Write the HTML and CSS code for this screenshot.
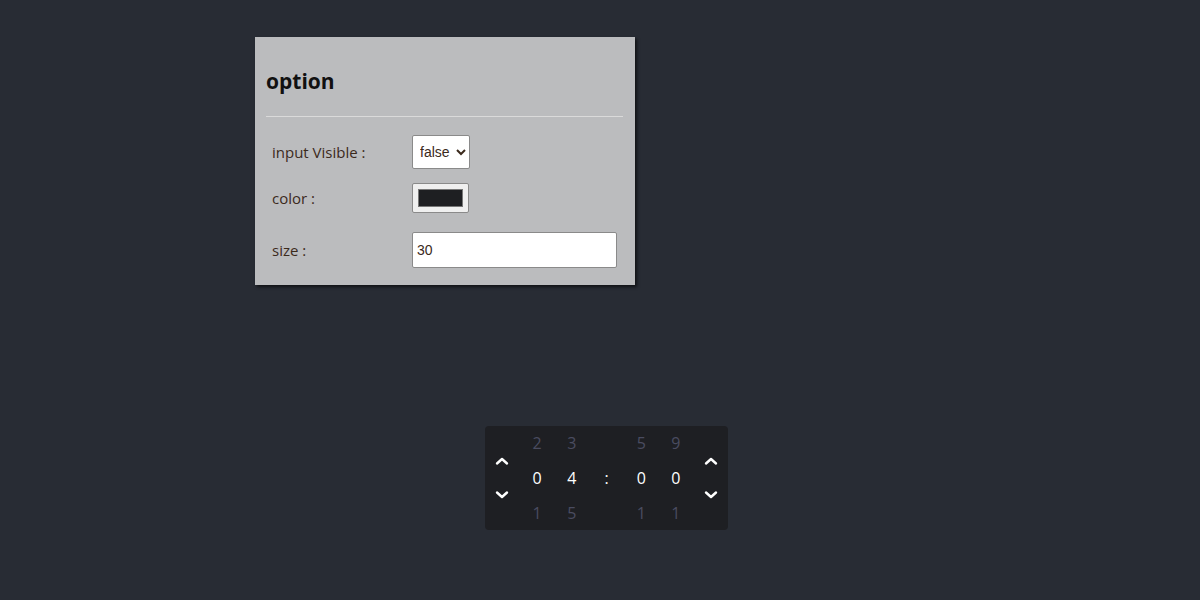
FILE: index.html
```html
<!doctype html>
<html>
  <head>
    <meta charset=utf-8>
    <title>option</title>
    <link rel="stylesheet" href="styles.css">
  </head>
  <body>
    <div class=panel>
      <h3 class=panel-title>option</h3>
      <hr class=panel-rule>
      <div class=opt-row>
        <label class=opt-label>input Visible :</label>
        <select class=opt-select>
          <option>false</option>
          <option>true</option>
        </select>
      </div>
      <div class="opt-row opt-row-color">
        <label class=opt-label>color :</label>
        <span class=opt-color><span class=opt-swatch></span></span>
      </div>
      <div class=opt-row>
        <label class=opt-label>size :</label>
        <input class=opt-text type=text value=30>
      </div>
    </div>

    <div class=picker>
      <div class=pk-arrows>
        <svg width=14 height=10 viewBox="0 0 14 10"><path d="M2 7.5 L7 3 L12 7.5" fill=none stroke="#fff" stroke-width=2.4 stroke-linecap=round stroke-linejoin=round /></svg>
        <svg width=14 height=10 viewBox="0 0 14 10"><path d="M2 2.5 L7 7 L12 2.5" fill=none stroke="#fff" stroke-width=2.4 stroke-linecap=round stroke-linejoin=round /></svg>
      </div>
      <div class=pk-col><span class=dim>2</span><span>0</span><span class=dim>1</span></div>
      <div class=pk-col><span class=dim>3</span><span>4</span><span class=dim>5</span></div>
      <div class=pk-col><span></span><span>:</span><span></span></div>
      <div class=pk-col><span class=dim>5</span><span>0</span><span class=dim>1</span></div>
      <div class=pk-col><span class=dim>9</span><span>0</span><span class=dim>1</span></div>
      <div class=pk-arrows>
        <svg width=14 height=10 viewBox="0 0 14 10"><path d="M2 7.5 L7 3 L12 7.5" fill=none stroke="#fff" stroke-width=2.4 stroke-linecap=round stroke-linejoin=round /></svg>
        <svg width=14 height=10 viewBox="0 0 14 10"><path d="M2 2.5 L7 7 L12 2.5" fill=none stroke="#fff" stroke-width=2.4 stroke-linecap=round stroke-linejoin=round /></svg>
      </div>
    </div>
  </body>
</html>
```
FILE: styles.css
```css
html, body {
  margin: 0;
  height: 100%;
  background: #282c34;
}
body {
  padding-top: 37px;
  box-sizing: border-box;
  font-family: 'Open Sans', 'Noto Sans', sans-serif;
}

.panel {
  box-sizing: border-box;
  width: 380px;
  height: 248px;
  margin-left: 255px;
  padding: 0 12px 0 11px;
  background: #bbbcbe;
  box-shadow: 2px 2px 3px #0009;
}
.panel-title {
  margin: 0;
  padding-top: 28px;
  font-size: 21px;
  line-height: 32px;
  font-weight: 700;
  color: #111;
}
.panel-rule {
  margin: 19px 0 18px;
  border: none;
  border-top: 1px solid #dadada;
  height: 0;
}

.opt-row {
  display: flex;
  align-items: center;
  padding-left: 6px;
  margin-bottom: 14px;
}
.opt-row-color { margin-bottom: 19px }
.opt-label {
  width: 140px;
  font-size: 15px;
  color: #3b2a1c;
}
.opt-select {
  box-sizing: border-box;
  width: 58px;
  height: 34px;
  padding: 0 2px 0 3px;
  border: 1px solid #8a8a8a;
  border-radius: 2px;
  background: #fff;
  font-family: 'Liberation Sans', Arial, sans-serif;
  font-size: 14px;
  color: #3b2a1c;
}
.opt-color {
  box-sizing: border-box;
  display: flex;
  width: 57px;
  height: 30px;
  padding: 5px 5px;
  border: 1px solid #8a8a8a;
  border-radius: 2px;
  background: #efefef;
}
.opt-swatch {
  flex: 1;
  background: #1e1f22;
  border: 1px solid #777;
}
.opt-text {
  box-sizing: border-box;
  width: 205px;
  height: 36px;
  padding: 0 4px;
  border: 1px solid #8a8a8a;
  border-radius: 2px;
  background: #fff;
  font-family: 'Liberation Sans', Arial, sans-serif;
  font-size: 14px;
  color: #3b2a1c;
}

.picker {
  display: grid;
  grid-template-columns: repeat(7, 1fr);
  width: 243px;
  height: 104px;
  margin: 141px 0 0 485px;
  background: #1e1f23;
  border-radius: 4px;
}
.pk-arrows {
  display: flex;
  flex-direction: column;
  align-items: center;
  justify-content: center;
  gap: 24px;
}
.pk-col {
  display: grid;
  grid-template-rows: repeat(3, 1fr);
  align-items: center;
  justify-items: center;
  color: #fff;
  font-size: 16px;
}
.pk-col .dim { color: #4a4c60 }
```
